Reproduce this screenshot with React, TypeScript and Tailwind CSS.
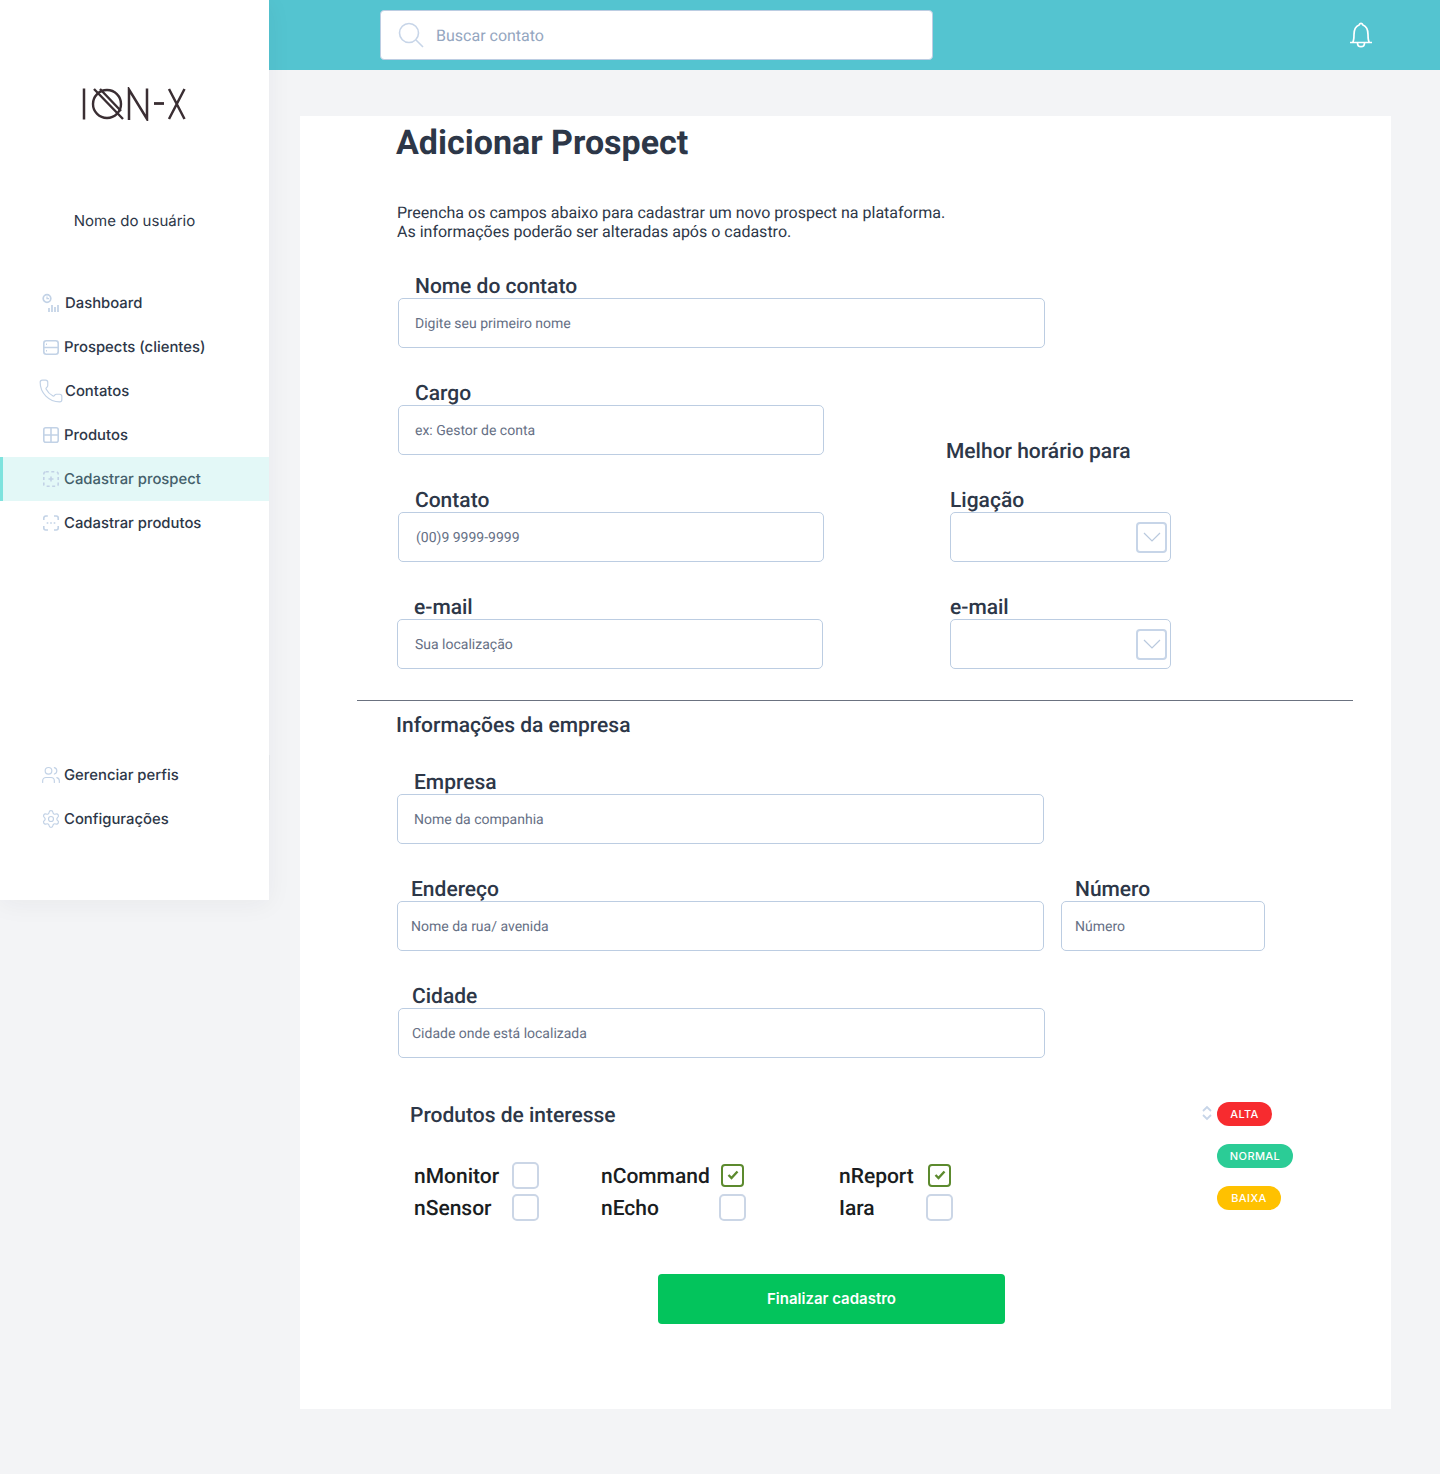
import { Phone, Users, Settings } from 'lucide-react';
import type { ReactNode } from 'react';

const roboto = "font-['Roboto',sans-serif]";

function IconDashboard() {
  return (
    <svg className="shrink-0" width="20" height="20" viewBox="0 0 20 20" fill="none" stroke="#c2d2e6" strokeWidth="1.7">
      <circle cx="6" cy="5.500" r="3.800" />
      <path d="M6 3.500v2.200h2" strokeWidth="1.200" />
      <path d="M8 19v-4M11 19v-7M14 19v-5M17 19v-7" />
    </svg>
  );
}

function IconServer() {
  return (
    <svg className="shrink-0" width="16" height="15" viewBox="0 0 16 15" fill="none" stroke="#c2d2e6" strokeWidth="1.600">
      <rect x="0.800" y="0.800" width="14.400" height="13.400" rx="2.500" />
      <path d="M1 7.500h14M3 4.200h1M3 10.800h1" />
    </svg>
  );
}

function IconGrid() {
  return (
    <svg className="shrink-0" width="16" height="16" viewBox="0 0 16 16" fill="none" stroke="#c2d2e6" strokeWidth="1.600">
      <rect x="0.800" y="0.800" width="14.400" height="14.400" rx="2" />
      <path d="M8 1v14M1 8h14" />
    </svg>
  );
}

function IconDashedAdd() {
  return (
    <svg className="shrink-0" width="16" height="16" viewBox="0 0 16 16" fill="none" stroke="#c2d2e6" strokeWidth="1.600">
      <rect x="0.800" y="0.800" width="14.400" height="14.400" rx="2" strokeDasharray="3 2.500" />
      <path d="M8 5.500v5M5.500 8h5" />
    </svg>
  );
}

function IconDashedDots() {
  return (
    <svg className="shrink-0" width="16" height="16" viewBox="0 0 16 16" fill="none" stroke="#c2d2e6" strokeWidth="1.600">
      <path d="M0.800 5V3a2 2 0 0 1 2-2h2M11 1h2.200a2 2 0 0 1 2 2v2M15.200 11v2a2 2 0 0 1-2 2H11M5 15H2.800a2 2 0 0 1-2-2v-2" />
      <path d="M4.500 7.200v1.600M8 7.200v1.600M11.500 7.200v1.600" />
    </svg>
  );
}

function NavItem({ icon, label, active, gap = 'gap-[5px]' }: { icon: ReactNode; label: string; active?: boolean; gap?: string }) {
  return (
    <div
      className={`flex h-[44px] items-center ${gap} text-[14.850px] font-medium ${
        active ? 'border-l-[3px] border-[#7fe3de] bg-[#e3f8f7] pl-[40px] text-[#44606b]' : 'pl-[43px] text-[#2d3748]'
      }`}
    >
      <span className="flex w-[16px] shrink-0 items-center justify-center">{icon}</span>
      <span>{label}</span>
    </div>
  );
}

function Field({
  label,
  placeholder,
  className,
  labelClass,
  textClass,
}: {
  label: string;
  placeholder: string;
  className: string;
  labelClass: string;
  textClass: string;
}) {
  return (
    <div className={className}>
      <div className={`h-[24px] text-[21px] leading-[26px] font-medium text-[#2d3748] ${labelClass}`}>{label}</div>
      <div className={`flex h-[50px] items-center rounded-[5px] border border-[#bccde2] bg-white pt-[2px] text-[14px] text-[#667085] ${textClass}`}>
        {placeholder}
      </div>
    </div>
  );
}

function SelectField({ label, className }: { label: string; className: string }) {
  return (
    <div className={className}>
      <div className="h-[24px] text-[21px] leading-[26px] font-medium text-[#2d3748]">{label}</div>
      <div className="flex h-[50px] w-[221px] items-center justify-end rounded-[5px] border border-[#bccde2] bg-white pr-[3px]">
        <span className="flex h-[31px] w-[31px] items-center justify-center rounded-[4px] border-[2.500px] border-[#c7d5e8]">
          <svg className="shrink-0" width="18" height="10" viewBox="0 0 18 10" fill="none" stroke="#b9c9de" strokeWidth="1.200">
            <path d="M1 1l8 8 8-8" />
          </svg>
        </span>
      </div>
    </div>
  );
}

function ProductCheck({ label, width, checked }: { label: string; width: string; checked?: boolean }) {
  return (
    <div className="flex h-[32px] items-center">
      <span className={`${width} pt-[6px] text-[21px] font-medium text-[#1a1d21]`}>{label}</span>
      <span className="flex w-[27px] justify-center">
        {checked ? (
          <span className="flex h-[23px] w-[23px] items-center justify-center rounded-[4px] border-[2.500px] border-[#5c8a2e]">
            <svg className="shrink-0" width="12" height="10" viewBox="0 0 12 10" fill="none" stroke="#5c8a2e" strokeWidth="2.400">
              <path d="M1.500 5l3 3 6-6.500" />
            </svg>
          </span>
        ) : (
          <span className="h-[27px] w-[27px] rounded-[5px] border-2 border-[#cbd6e6]" />
        )}
      </span>
    </div>
  );
}

export default function App() {
  return (
    <div className={`flex min-h-[1474px] w-[1440px] bg-[#f3f4f6] [text-rendering:geometricPrecision] ${roboto}`}>
      {/* Sidebar */}
      <aside className="relative z-10 h-[900px] w-[269px] shrink-0 bg-white font-['Inter',sans-serif] shadow-[0_4px_24px_rgba(30,41,59,0.05)]">
        <div className="flex justify-center pt-[87px]">
          <svg className="translate-x-[1px]" width="108" height="34" viewBox="0 0 108 34" fill="none" stroke="#3a2e33" strokeWidth="2.500" aria-label="ION-X">
            <path d="M2 1.500v31" />
            <circle cx="25" cy="17" r="14" strokeWidth="2.400" />
            <path d="M12 2l29 30M18 2l21 22" strokeWidth="2.400" />
            <path d="M47 33V2.500L65 32V1.500" />
            <path d="M72 16.500h10" strokeWidth="2.800" />
            <path d="M87 2l15.500 30M102.500 2L87 32" />
          </svg>
        </div>
        <div className="mt-[90px] text-center text-[15px] leading-[20px] text-[#2d3748]">Nome do usuário</div>
        <nav className="mt-[50px]">
          <NavItem icon={<IconDashboard />} label="Dashboard" gap="gap-[6px]" />
          <NavItem icon={<IconServer />} label="Prospects (clientes)" />
          <NavItem icon={<Phone className="shrink-0" size={26} strokeWidth={1.100} color="#c2d2e6" />} label="Contatos" gap="gap-[6px]" />
          <NavItem icon={<IconGrid />} label="Produtos" />
          <NavItem icon={<IconDashedAdd />} label="Cadastrar prospect" active />
          <NavItem icon={<IconDashedDots />} label="Cadastrar produtos" />
        </nav>
        <nav className="mt-[208px]">
          <NavItem icon={<Users className="shrink-0" size={20} strokeWidth={1.400} color="#c2d2e6" />} label="Gerenciar perfis" />
          <NavItem icon={<Settings className="shrink-0" size={20} strokeWidth={1.400} color="#c2d2e6" />} label="Configurações" />
        </nav>
        <div className="absolute top-[755px] -right-[2px] h-[45px] w-[2px] bg-gradient-to-r from-[#dfe1e5] to-[#f3f4f6]" />
      </aside>

      <div className="w-[1171px]">
        {/* Top bar */}
        <header className="flex h-[70px] items-center bg-[#54c4d0] pr-[67px] pl-[111px]">
          <div className="flex h-[50px] w-[553px] items-center rounded-[4px] border border-[#bccde2] bg-white pl-[17px] text-[16px] text-[#94a6c0]">
            <svg className="shrink-0" width="26" height="26" viewBox="0 0 26 26" fill="none" stroke="#c7d5e8" strokeWidth="1.600">
              <circle cx="11" cy="11" r="9.500" />
              <path d="M18 18l7 7" />
            </svg>
            <span className="mt-[1px] ml-[12px]">Buscar contato</span>
          </div>
          <svg className="ml-auto" width="24" height="26" viewBox="0 0 24 26" fill="none" stroke="#fff" strokeWidth="1.700">
            <path d="M1 20.500h22M3.500 20.500c1.500-1.500 1.500-3.500 1.500-8C5 7 7.500 4 10 3c.5-1 1-1.700 2-1.700s1.500.7 2 1.700c2.500 1 5 4 5 9.500 0 4.500 0 6.500 1.500 8" />
            <path d="M8.500 21c0 2.200 1.500 3.700 3.500 3.700s3.500-1.500 3.500-3.700" />
          </svg>
        </header>

        {/* Form card */}
        <main className="mt-[46px] ml-[31px] h-[1293px] w-[1091px] bg-white text-[#2d3748]">
          <h1 className="ml-[96px] h-[52px] text-[34px] leading-[54px] font-bold text-[#2d3748]">Adicionar Prospect</h1>
          <p className="mt-[35px] ml-[97px] text-[16px] leading-[19px] text-[#2d3748]">
            Preencha os campos abaixo para cadastrar um novo prospect na plataforma.
            <br />
            As informações poderão ser alteradas após o cadastro.
          </p>

          <Field
            label="Nome do contato"
            placeholder="Digite seu primeiro nome"
            className="mt-[33px] ml-[98px] w-[647px]"
            labelClass="pl-[17px]"
            textClass="pl-[16px]"
          />

          <div className="mt-[33px] flex">
            <div className="w-[650px] shrink-0">
              <Field
                label="Cargo"
                placeholder="ex: Gestor de conta"
                className="ml-[98px] w-[426px]"
                labelClass="pl-[17px]"
                textClass="pl-[16px]"
              />
              <Field
                label="Contato"
                placeholder="(00)9 9999-9999"
                className="mt-[33px] ml-[98px] w-[426px]"
                labelClass="pl-[17px]"
                textClass="pl-[17px]"
              />
              <Field
                label="e-mail"
                placeholder="Sua localização"
                className="mt-[33px] ml-[97px] w-[426px]"
                labelClass="pl-[17px]"
                textClass="pl-[17px]"
              />
            </div>
            <div>
              <h2 className="mt-[58px] -ml-[4px] h-[24px] text-[21px] leading-[26px] font-medium">Melhor horário para</h2>
              <SelectField label="Ligação" className="mt-[25px]" />
              <SelectField label="e-mail" className="mt-[33px]" />
            </div>
          </div>

          <div className="mt-[31px] ml-[57px] h-[1px] w-[996px] bg-[#6b7280]" />
          <h2 className="mt-[12px] ml-[96px] h-[24px] text-[21px] leading-[26px] font-medium">Informações da empresa</h2>

          <Field
            label="Empresa"
            placeholder="Nome da companhia"
            className="mt-[33px] ml-[97px] w-[647px]"
            labelClass="pl-[17px]"
            textClass="pl-[16px]"
          />

          <div className="mt-[33px] flex">
            <Field
              label="Endereço"
              placeholder="Nome da rua/ avenida"
              className="ml-[97px] w-[647px]"
              labelClass="pl-[14px]"
              textClass="pl-[13px]"
            />
            <Field
              label="Número"
              placeholder="Número"
              className="ml-[17px] w-[204px]"
              labelClass="pl-[14px]"
              textClass="pl-[13px]"
            />
          </div>

          <Field
            label="Cidade"
            placeholder="Cidade onde está localizada"
            className="mt-[33px] ml-[98px] w-[647px]"
            labelClass="pl-[14px]"
            textClass="pl-[13px]"
          />

          <div className="mt-[44px] flex">
            <div className="w-[899px] shrink-0">
              <h2 className="ml-[110px] h-[24px] text-[21px] leading-[28px] font-medium">Produtos de interesse</h2>
              <div className="mt-[33px] ml-[114px] flex">
                <div className="w-[187px]">
                  <ProductCheck label="nMonitor" width="w-[98px]" />
                  <ProductCheck label="nSensor" width="w-[98px]" />
                </div>
                <div className="w-[238px]">
                  <ProductCheck label="nCommand" width="w-[118px]" checked />
                  <ProductCheck label="nEcho" width="w-[118px]" />
                </div>
                <div>
                  <ProductCheck label="nReport" width="w-[87px]" checked />
                  <ProductCheck label="Iara" width="w-[87px]" />
                </div>
              </div>
            </div>
            <svg className="mt-[3px] shrink-0" width="18" height="16" viewBox="0 0 18 16" fill="none" stroke="#c7d5e8" strokeWidth="1.800">
              <path d="M4 6l4-4 4 4M4 10l4 4 4-4" />
            </svg>
            <div className="flex flex-col items-start gap-[18px] font-['Inter',sans-serif] text-[11px] leading-[24px] font-medium tracking-[0.4px] text-white">
              <span className="h-[24px] w-[55px] rounded-full bg-[#f72b2f] text-center">ALTA</span>
              <span className="h-[24px] w-[76px] rounded-full bg-[#2bcc96] text-center">NORMAL</span>
              <span className="h-[24px] w-[64px] rounded-full bg-[#ffc100] text-center">BAIXA</span>
            </div>
          </div>

          <button className="mt-[51px] ml-[358px] block h-[50px] w-[347px] rounded-[4px] bg-[#03c45c] font-['Inter',sans-serif] text-[15px] font-semibold text-white">
            Finalizar cadastro
          </button>
        </main>
      </div>
    </div>
  );
}
